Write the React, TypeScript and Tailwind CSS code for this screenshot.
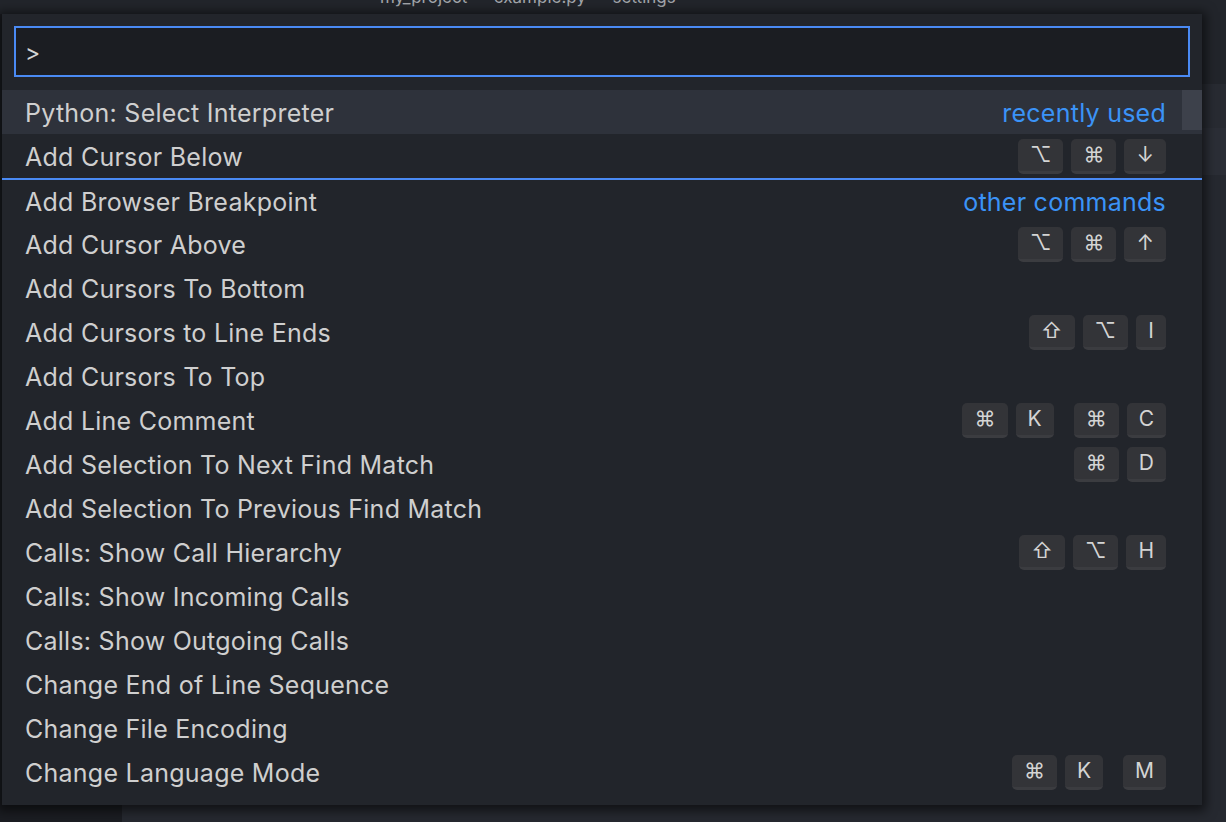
import React from 'react';

type Row = {
  label: string;
  note?: string;
  keys?: string[][];
  active?: boolean;
  separator?: boolean;
};

const rows: Row[] = [
  { label: 'Python: Select Interpreter', note: 'recently used', active: true },
  { label: 'Add Cursor Below', keys: [['⌥', '⌘', '↓']] },
  { label: 'Add Browser Breakpoint', note: 'other commands', separator: true },
  { label: 'Add Cursor Above', keys: [['⌥', '⌘', '↑']] },
  { label: 'Add Cursors To Bottom' },
  { label: 'Add Cursors to Line Ends', keys: [['⇧', '⌥', 'I']] },
  { label: 'Add Cursors To Top' },
  { label: 'Add Line Comment', keys: [['⌘', 'K'], ['⌘', 'C']] },
  { label: 'Add Selection To Next Find Match', keys: [['⌘', 'D']] },
  { label: 'Add Selection To Previous Find Match' },
  { label: 'Calls: Show Call Hierarchy', keys: [['⇧', '⌥', 'H']] },
  { label: 'Calls: Show Incoming Calls' },
  { label: 'Calls: Show Outgoing Calls' },
  { label: 'Change End of Line Sequence' },
  { label: 'Change File Encoding' },
  { label: 'Change Language Mode', keys: [['⌘', 'K'], ['M']] },
];

function Key({ k }: { k: string }) {
  return (
    <span className="flex h-[35px] min-w-[30px] items-center justify-center rounded-[5px] border-b-[3px] border-b-[#3b3c40] bg-[#333438] px-3 text-[21px] leading-none text-[#d4d4d4]">
      {k}
    </span>
  );
}

function CommandRow({ row }: { row: Row }) {
  return (
    <div
      className={`flex h-[44px] items-center justify-between pl-[23px] pr-[36px] ${
        row.separator ? 'border-t-2 border-[#4a8af4]' : ''
      } ${row.active ? 'bg-[#2e323b]' : ''}`}
    >
      <span className="pt-[3px] text-[25px] tracking-[0.25px] text-[#cfcfcf]">{row.label}</span>
      {row.note && (
        <span className="pt-[3px] text-[25px] tracking-[0.25px] text-[#3b93f7]">{row.note}</span>
      )}
      {row.keys && (
        <div className="flex items-center gap-5">
          {row.keys.map((chord, i) => (
            <div key={i} className="flex items-center gap-2">
              {chord.map((k, j) => (
                <Key key={j} k={k} />
              ))}
            </div>
          ))}
        </div>
      )}
    </div>
  );
}

export default function App() {
  return (
    <div className="relative h-[822px] w-[1226px] overflow-hidden bg-[#22252b] font-['Inter','DejaVu_Sans',sans-serif]">
      {/* window title, mostly hidden behind the palette */}
      <div className="h-[14px] overflow-hidden">
        <div className="-mt-[15px] pl-[380px] text-[17px] text-[#a3a6ab]">
          my_project — example.py — settings
        </div>
      </div>

      {/* editor behind */}
      <div className="flex h-[808px]">
        <div className="w-[122px] bg-[#1b1d22]" />
        <div className="flex flex-1 flex-col">
          <div className="h-[70px] bg-[#22252b]" />
          <div className="h-[44px] bg-[#282b32]" />
          <div className="h-[47px] bg-[#2b2e36]" />
          <div className="flex-1 bg-[#262930]" />
        </div>
      </div>

      {/* command palette */}
      <div className="absolute left-[2px] top-[14px] h-[791px] w-[1200px] overflow-hidden bg-[#22252b] shadow-[0_2px_10px_4px_rgba(0,0,0,0.55)]">
        <div className="px-3 pt-3">
          <div className="flex h-[51px] items-center border-2 border-[#4a8af4] bg-[#1b1d22] pl-[9px]">
            <span className="pt-1 text-[23px] text-[#d4d4d4]">&gt;</span>
          </div>
        </div>
        <div className="relative mt-[13px]">
          {rows.map((row) => (
            <CommandRow key={row.label} row={row} />
          ))}
          <div className="absolute right-0 top-0 h-[40px] w-[20px] bg-[#3d414b]" />
        </div>
      </div>
    </div>
  );
}
